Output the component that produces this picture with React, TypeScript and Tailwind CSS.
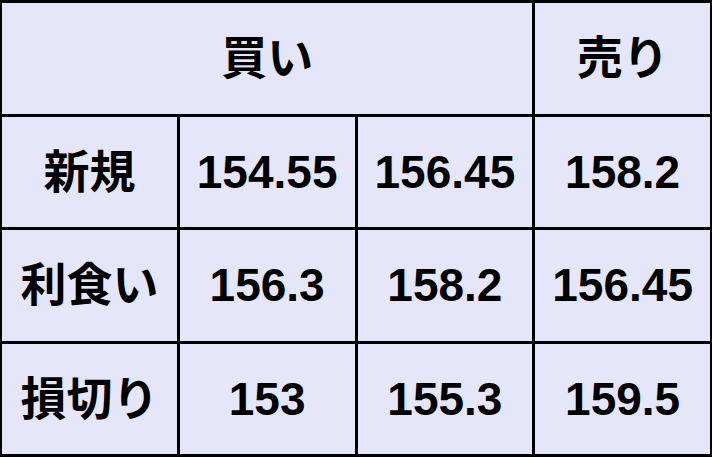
const cell =
  "bg-[#e6e6fa] flex items-center justify-center text-[46px] font-bold text-black leading-none";

const rows: [string, string, string, string][] = [
  ["新規", "154.55", "156.45", "158.2"],
  ["利食い", "156.3", "158.2", "156.45"],
  ["損切り", "153", "155.3", "159.5"],
];

export default function App() {
  return (
    <div
      className="w-[712px] h-[457px] bg-black grid grid-cols-4 grid-rows-4 gap-[3px] px-[2px] py-[3px]"
      style={{ fontFamily: '"Liberation Sans", "Noto Sans CJK JP", sans-serif' }}
    >
      <div className={`${cell} col-span-3`}>買い</div>
      <div className={cell}>売り</div>
      {rows.map((r) =>
        r.map((v, i) => (
          <div key={r[0] + i} className={cell}>
            {v}
          </div>
        ))
      )}
    </div>
  );
}
